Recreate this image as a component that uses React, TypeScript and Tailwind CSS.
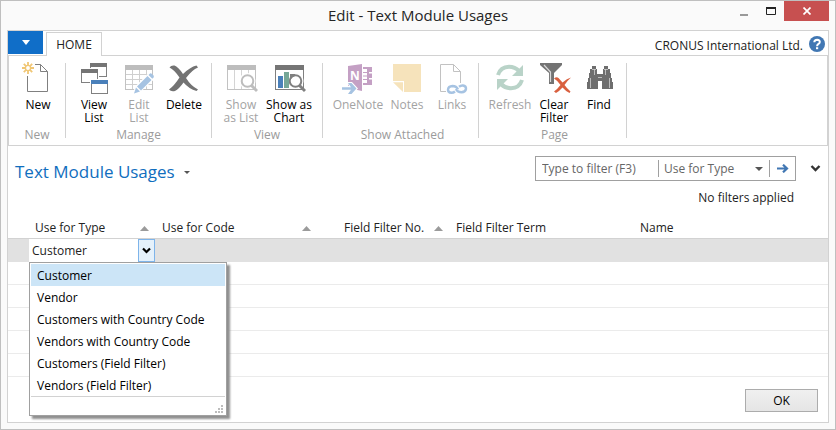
import { Fragment, useState, type ReactNode } from "react";

function Icon({ children }: { children: ReactNode }) {
  return (
    <svg width="34" height="34" viewBox="0 0 34 34" fill="none" aria-hidden="true" className="shrink-0">
      {children}
    </svg>
  );
}

function NewIcon() {
  return (
    <Icon>
      <path d="M14 4.5H19.5L26.5 11.5V31.5H6.5V16" stroke="#808080" />
      <path d="M19.5 4.5V11.5H26.5" stroke="#808080" />
      <circle cx="7" cy="8" r="2.6" stroke="#f0c674" strokeWidth="1.4" />
      <path
        d="M7 2V5M7 11V14M1 8H4M10 8H13M2.8 3.8L4.8 5.8M9.2 10.2L11.2 12.2M11.2 3.8L9.2 5.8M4.8 10.2L2.8 12.2"
        stroke="#f0c674"
        strokeWidth="1.8"
      />
    </Icon>
  );
}

function ViewListIcon() {
  return (
    <Icon>
      <rect x="13.5" y="3.5" width="16" height="13" fill="#fff" stroke="#808080" />
      <path d="M13 3H30V7H13Z" fill="#757575" />
      <rect x="3" y="8" width="19" height="16" fill="#fff" />
      <rect x="4.5" y="9.5" width="16" height="13" fill="#fff" stroke="#808080" />
      <path d="M4 9H21V13H4Z" fill="#757575" />
      <rect x="13" y="19" width="19" height="15" fill="#fff" />
      <rect x="14.5" y="20.5" width="16" height="13" fill="#fff" stroke="#808080" />
      <path d="M14 20H31V24H14Z" fill="#4a80ba" />
    </Icon>
  );
}

function EditListIcon() {
  return (
    <Icon>
      <rect x="3.5" y="5.5" width="27" height="24" stroke="#c2c2c2" />
      <path d="M3 5H31V10H3Z" fill="#bdbdbd" />
      <path d="M10.5 10V29M17.5 10V29M24.5 10V29M4 14.5H30M4 19.5H30M4 24.5H30" stroke="#cfcfcf" />
      <path d="M12 33L14 27L27 14L32 18L18 31Z" fill="#fff" stroke="#fff" strokeWidth="2" />
      <path d="M12 33.5L14 27.5L18 31.5Z" fill="#a6c3e2" />
      <path d="M15 26.5L25.5 16L29.5 20L19 30.5Z" fill="#a6c3e2" />
      <path d="M26.5 15L28 13.5Q29 13 30 14L31.5 15.5Q32.3 16.5 31.5 17.5L30.3 18.8Z" fill="#a6c3e2" />
    </Icon>
  );
}

function DeleteIcon() {
  return (
    <Icon>
      <path
        d="M2.5 7.5Q4 5 7.5 5.5Q11 6.5 16 14Q23 7 29.5 5.5L31 7.5Q25 10 19 18Q24 26 31 29.5L29.5 31Q22 29 16.5 22.5Q12 29 8 31Q4 32 2 29.5Q7 26 12.5 17.5Q7 9.5 2.5 7.5Z"
        fill="#737373"
      />
    </Icon>
  );
}

function Magnifier({ color }: { color: string }) {
  return (
    <>
      <circle cx="23.5" cy="21" r="8" fill="#fff" />
      <circle cx="23.5" cy="21" r="5.8" fill="#fff" stroke={color} strokeWidth="2" />
      <path d="M27.5 25.5L33 31" stroke={color} strokeWidth="3" />
    </>
  );
}

function ShowListIcon() {
  return (
    <Icon>
      <rect x="3.5" y="5.5" width="28" height="24" stroke="#c2c2c2" />
      <path d="M3 5H32V10H3Z" fill="#bdbdbd" />
      <path d="M10.5 10V29M17.5 10V29M24.5 10V29" stroke="#d4d4d4" />
      <Magnifier color="#bdbdbd" />
    </Icon>
  );
}

function ShowChartIcon() {
  return (
    <Icon>
      <rect x="3.5" y="5.5" width="28" height="24" stroke="#808080" />
      <path d="M3 5H32V10H3Z" fill="#757575" />
      <Magnifier color="#808080" />
      <path d="M18 14H23V16Q20 17 18.5 20H18Z" fill="#808080" />
      <path d="M6 16H11V28H6Z" fill="#4a80ba" />
      <path d="M12 12H17V28H12Z" fill="#76a797" />
    </Icon>
  );
}

function OneNoteIcon() {
  return (
    <Icon>
      <path d="M7 6L21 4V31L7 28Z" fill="#c4a0c4" />
      <path d="M22 8H27V24H22" stroke="#c4a0c4" strokeWidth="2" />
      <path d="M22 12.5H26M22 16H26M22 19.5H26" stroke="#c4a0c4" />
      <path d="M28 7H31V12H28ZM28 13.5H31V18H28ZM28 19.5H31V25H28Z" fill="#c4a0c4" />
      <text x="9" y="20" fontFamily="Open Sans" fontWeight="700" fontSize="12" fill="#fff">
        N
      </text>
      <path d="M0 26H8L6 22H11L17 28.5L11 35H6L8 31H0Z" fill="#fff" />
      <path d="M1 27.2H10L7 23H10.5L15.5 28.5L10.5 34H7L10 29.8H1Z" fill="#a6c3e2" />
    </Icon>
  );
}

function NotesIcon() {
  return (
    <Icon>
      <path d="M3 4H31V32H14V21H3Z" fill="#f6e3bb" />
      <path d="M3 22.2H13V32Z" fill="#f6e3bb" />
    </Icon>
  );
}

function LinksIcon() {
  return (
    <Icon>
      <path d="M11 31.5H5.5V4.5H18.5L25.5 11.5V23" stroke="#c2c2c2" />
      <path d="M18.5 4.5V11.5H25.5" stroke="#c2c2c2" />
      <path
        d="M20 31.5Q18.5 32.8 16.5 32.8Q12.8 32.5 13 29.5Q13.3 26.2 17.5 26Q21.5 26 23 29.5M24 26.8Q26 25.2 28 25.5Q31.3 26 31 29Q30.5 32 26.5 32.3Q22.5 32.3 21 29"
        stroke="#a6c3e2"
        strokeWidth="2.4"
      />
    </Icon>
  );
}

function RefreshIcon() {
  return (
    <Icon>
      <path d="M5 15Q7.5 7 16 6.8Q22 6.8 26 11" stroke="#b9d3c8" strokeWidth="4" />
      <path d="M30 5V16H19Z" fill="#b9d3c8" />
      <path d="M29 20Q26.5 28 18 28.2Q12 28.2 8 24" stroke="#b9d3c8" strokeWidth="4" />
      <path d="M4 30V19H15Z" fill="#b9d3c8" />
    </Icon>
  );
}

function ClearFilterIcon() {
  return (
    <Icon>
      <path d="M3 3H25V5L17 13V24H12V13L3 5Z" fill="#737373" />
      <path d="M7 5L13.5 12V22" stroke="#d8d8d8" strokeWidth="1.2" />
      <path
        d="M17 18.5Q19.5 16.5 21.5 18L25.5 22.5Q30 18.5 34 17.5Q30.5 20.5 27.5 25Q30 28.5 33.5 31.5L32.5 33Q28.5 31 25.5 27.5Q22 31.5 19 33L17 31.5Q20.5 29 23.5 25Q20.5 20.5 17 18.5Z"
        fill="#d9603f"
      />
    </Icon>
  );
}

function FindIcon() {
  return (
    <Icon>
      <path
        d="M10 6H14V9H15V14H21V9H22V6H26V9H28V13H29V18H30V22H31V29H20V21H16V29H5V22H6V18H7V13H8V9H10Z"
        fill="#6e6e6e"
      />
      <path d="M8.5 18V28M12.5 9V15M27.5 18V28M23.5 9V15M10 9.5H14M22 9.5H26M16 17.5H20" stroke="#d0d0d0" strokeWidth="0.8" />
    </Icon>
  );
}

type Command = { lines: string[]; icon: ReactNode; width: string; disabled?: boolean };
type Group = { label: string; box: string; commands: Command[] };

const groups: Group[] = [
  {
    label: "New",
    box: "w-[57px] pl-[5px]",
    commands: [{ lines: ["New"], icon: <NewIcon />, width: "w-12" }],
  },
  {
    label: "Manage",
    box: "w-[146px] pl-[5px]",
    commands: [
      { lines: ["View", "List"], icon: <ViewListIcon />, width: "w-[46px]" },
      { lines: ["Edit", "List"], icon: <EditListIcon />, width: "w-[44px]", disabled: true },
      { lines: ["Delete"], icon: <DeleteIcon />, width: "w-[46px]" },
    ],
  },
  {
    label: "View",
    box: "w-[111px] pl-[5px]",
    commands: [
      { lines: ["Show", "as List"], icon: <ShowListIcon />, width: "w-12", disabled: true },
      { lines: ["Show as", "Chart"], icon: <ShowChartIcon />, width: "w-12" },
    ],
  },
  {
    label: "Show Attached",
    box: "w-[156px] pl-[9px]",
    commands: [
      { lines: ["OneNote"], icon: <OneNoteIcon />, width: "w-[52px]", disabled: true },
      { lines: ["Notes"], icon: <NotesIcon />, width: "w-[46px]", disabled: true },
      { lines: ["Links"], icon: <LinksIcon />, width: "w-[44px]", disabled: true },
    ],
  },
  {
    label: "Page",
    box: "w-[148px] pl-[9px]",
    commands: [
      { lines: ["Refresh"], icon: <RefreshIcon />, width: "w-[44px]", disabled: true },
      { lines: ["Clear", "Filter"], icon: <ClearFilterIcon />, width: "w-[44px]" },
      { lines: ["Find"], icon: <FindIcon />, width: "w-[46px]" },
    ],
  },
];

const options = [
  "Customer",
  "Vendor",
  "Customers with Country Code",
  "Vendors with Country Code",
  "Customers (Field Filter)",
  "Vendors (Field Filter)",
];

const columns = [
  { label: "Use for Type", width: "w-[126px]", cell: "pl-[6px]", sorted: true },
  { label: "Use for Code", width: "w-[162px]", cell: "pl-[7px]", sorted: true },
  { label: "Field Filter No.", width: "w-[132px]", cell: "pl-[27px]", sorted: true },
  { label: "Field Filter Term", width: "w-[184px]", cell: "pl-[7px]", sorted: false },
  { label: "Name", width: "", cell: "pl-[7px]", sorted: false },
];

function Ribbon() {
  return (
    <div className="flex h-[90px] border-x border-b border-[#d2d2d2] pt-[7px]">
      {groups.map((group) => (
        <section key={group.label} aria-label={group.label} className={`flex h-[75px] shrink-0 flex-col border-r border-[#d2d2d2] ${group.box}`}>
          <div className="-mt-[3px] flex h-[68px] shrink-0">
            {group.commands.map((c) => (
              <button
                key={c.lines[0]}
                disabled={c.disabled}
                className={`flex shrink-0 flex-col items-center gap-1 whitespace-nowrap leading-[13px] ${c.width} ${c.disabled ? "text-[#a3a3a3]" : "text-black"}`}
              >
                {c.icon}
                <span>
                  {c.lines.map((line, i) => (
                    <Fragment key={line}>
                      {i > 0 && <br />}
                      {line}
                    </Fragment>
                  ))}
                </span>
              </button>
            ))}
          </div>
          <div className="shrink-0 pr-[5px] text-center leading-[14px] text-[#9b9b9b]">{group.label}</div>
        </section>
      ))}
    </div>
  );
}

function TypePicker() {
  const [value, setValue] = useState("Customer");
  return (
    <div className="relative flex h-[23px] bg-white">
      <input
        aria-label="Use for Type"
        value={value}
        onChange={(e) => setValue(e.target.value)}
        className="min-w-0 flex-1 bg-white pl-[3px] text-[#222] outline-none"
      />
      <button aria-label="Open list" className="flex w-[17px] items-center justify-center border border-[#7eb4ea] bg-[#e5f1fb]">
        <svg width="9" height="7" viewBox="0 0 9 7" fill="none">
          <path d="M1 1.5L4.5 5L8 1.5" stroke="#000" strokeWidth="2.2" />
        </svg>
      </button>
      <div className="absolute left-0 top-[23px] z-10 h-[154px] w-[198px] border border-[#a0a0a0] bg-white p-px text-black shadow-[3px_3px_2px_#909090]">
        <ul role="listbox" aria-label="Use for Type values" className="border-b border-[#d2d2d2]">
          {options.map((option) => (
            <li
              key={option}
              role="option"
              aria-selected={option === value}
              onClick={() => setValue(option)}
              className={`h-[22px] pl-[6px] leading-6 ${option === value ? "bg-[#cce5f7]" : ""}`}
            >
              {option}
            </li>
          ))}
        </ul>
        <svg width="9" height="9" viewBox="0 0 9 9" className="ml-auto mr-px mt-[8px]" fill="#bdbdbd" aria-hidden="true">
          <path d="M6 0h2v2h-2zM3 3h2v2h-2zM6 3h2v2h-2zM0 6h2v2h-2zM3 6h2v2h-2zM6 6h2v2h-2z" />
        </svg>
      </div>
    </div>
  );
}

function UsageTable() {
  return (
    <table className="w-full table-fixed border-collapse text-left text-[#222]">
      <thead>
        <tr className="h-[22px]">
          <th className="w-[21px] p-0" />
          {columns.map((c) => (
            <th key={c.label} scope="col" className={`p-0 font-normal ${c.width}`}>
              <div className={`flex items-center justify-between pr-[6px] leading-[22px] ${c.cell}`}>
                {c.label}
                {c.sorted && (
                  <svg width="9" height="5" viewBox="0 0 9 5" fill="#9b9b9b" aria-hidden="true">
                    <path d="M4.5 0L9 5H0Z" />
                  </svg>
                )}
              </div>
            </th>
          ))}
        </tr>
      </thead>
      <tbody>
        <tr className="h-[23px] bg-[#e1e1e1] shadow-[0_-1px_0_#d2d2d2]">
          <td className="p-0" />
          <td className="p-0">
            <TypePicker />
          </td>
          <td colSpan={4} className="p-0" />
        </tr>
        {[1, 2, 3, 4, 5].map((row) => (
          <tr key={row} className="h-[23px] shadow-[inset_0_-1px_0_#ebebeb]">
            <td colSpan={6} className="p-0" />
          </tr>
        ))}
      </tbody>
    </table>
  );
}

export default function App() {
  return (
    <div className="flex min-h-screen flex-col border border-[#bfbfbf] bg-[#fafafa] px-[6px] pb-[6px] font-['Open_Sans','Noto_Sans',sans-serif] text-[12px] text-black">
      <header className="grid h-[29px] grid-cols-[1fr_auto_1fr] items-start">
        <h1 className="col-start-2 text-[15px] leading-[29px] text-[#262626]">Edit - Text Module Usages</h1>
        <div className="flex justify-end">
          <button aria-label="Minimize" className="flex h-5 w-[27px] items-center justify-center">
            <svg width="8" height="14" viewBox="0 0 8 14">
              <path d="M0 10H8V12H0Z" fill="#999" />
            </svg>
          </button>
          <button aria-label="Maximize" className="flex h-5 w-[27px] items-center justify-center">
            <svg width="10" height="8" viewBox="0 0 10 8" fill="none">
              <path d="M0.5 1V7.5H9.5V1" stroke="#222" />
              <path d="M0 0H10V2H0Z" fill="#222" />
            </svg>
          </button>
          <button aria-label="Close" className="flex h-5 w-[45px] items-center justify-center bg-[#c75050]">
            <svg width="8" height="8" viewBox="0 0 8 8">
              <path d="M0.5 0.5L7.5 7.5M7.5 0.5L0.5 7.5" stroke="#fff" strokeWidth="1.7" />
            </svg>
          </button>
        </div>
      </header>

      <main className="flex flex-1 flex-col border border-[#d2d2d2] bg-white">
        <nav className="flex h-[25px] items-end border-b border-[#d2d2d2]" aria-label="Ribbon tabs">
          <button aria-label="Application menu" className="mb-px flex h-[23px] w-[35px] items-center justify-center bg-[#106ec8]">
            <svg width="8" height="5" viewBox="0 0 8 5" fill="#fff">
              <path d="M0 0H8L4 5Z" />
            </svg>
          </button>
          <button className="-mb-px ml-[3px] h-6 w-14 border border-b-0 border-[#d2d2d2] bg-white pt-px text-[#222]">HOME</button>
          <span className="ml-auto leading-[18px] text-[#222]">CRONUS International Ltd.</span>
          <button aria-label="Help" className="mb-[3px] ml-[6px] mr-[3px]">
            <svg width="16" height="16" viewBox="0 0 16 16" fill="none">
              <circle cx="8" cy="8" r="8" fill="#4177b3" />
              <path d="M5.3 6.3Q5.3 3.7 8.2 3.7Q10.8 3.8 10.8 6Q10.7 7.4 9.2 8.2Q8.1 8.9 8.1 10.2" stroke="#fff" strokeWidth="2" />
              <path d="M7 11.2H9.2V13.2H7Z" fill="#fff" />
            </svg>
          </button>
        </nav>

        <Ribbon />

        <div className="flex items-start justify-between pl-[7px] pt-[10px]">
          <h2 className="flex items-center text-[17px] leading-8 text-[#106ebe]">
            Text Module Usages
            <button aria-label="Page menu" className="ml-[9px]">
              <svg width="6" height="3" viewBox="0 0 6 3" fill="#555">
                <path d="M0 0H6L3 3Z" />
              </svg>
            </button>
          </h2>
          <div className="flex items-center">
            <form className="flex h-[25px] w-[261px] items-center border border-[#a0a0a0] text-[#666]">
              <input aria-label="Filter text" placeholder="Type to filter (F3)" className="h-full min-w-0 flex-1 pl-[6px] outline-none placeholder:text-[#666]" />
              <div className="relative flex h-[17px] w-[112px] items-center border-x border-[#a0a0a0]">
                <select aria-label="Filter column" className="w-full appearance-none bg-transparent pl-[5px] outline-none">
                  <option>Use for Type</option>
                  <option>Use for Code</option>
                </select>
                <svg width="8" height="4" viewBox="0 0 8 4" fill="#555" className="pointer-events-none absolute right-[6px]">
                  <path d="M0 0H8L4 4Z" />
                </svg>
              </div>
              <button type="button" aria-label="Apply filter" className="flex w-[25px] justify-center">
                <svg width="12" height="9" viewBox="0 0 12 9" fill="none">
                  <path d="M0 4.5H10M6 0.7L10 4.5L6 8.3" stroke="#4177b3" strokeWidth="2.2" />
                </svg>
              </button>
            </form>
            <button aria-label="Expand filter pane" className="ml-[14px] mr-[7px]">
              <svg width="11" height="7" viewBox="0 0 11 7" fill="none">
                <path d="M1.5 1L5.5 5L9.5 1" stroke="#333" strokeWidth="2.4" />
              </svg>
            </button>
          </div>
        </div>
        <p className="pr-[34px] text-right leading-5 text-[#222]">No filters applied</p>

        <div className="pt-[9px]">
          <UsageTable />
        </div>

        <footer className="mt-auto flex justify-end pb-[10px] pr-[10px]">
          <button className="h-[23px] w-[73px] border border-[#acacac] bg-linear-to-b from-[#f0f0f0] to-[#e5e5e5]">OK</button>
        </footer>
      </main>
    </div>
  );
}
